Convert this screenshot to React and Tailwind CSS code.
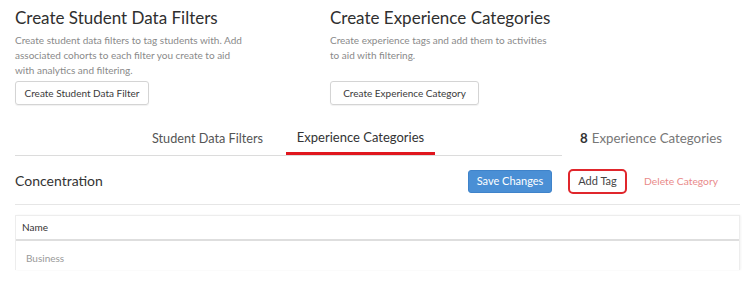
export default function App() {
  return (
    <div className="w-[750px] h-[299px] overflow-hidden bg-white pl-[15px] pr-[10px] pt-[7px] font-['Lato',sans-serif] text-[#333]">
      <div className="flex">
        <div className="w-[315px] flex flex-col items-start">
          <h2 className="text-[17px] leading-[22px] text-[#2f2f2f]">Create Student Data Filters</h2>
          <p className="mt-[4px] w-[235px] min-h-[45px] text-[10px] leading-[15px] text-[#8a8a8a]">
            Create student data filters to tag students with. Add associated cohorts to each filter you create to aid with analytics and filtering.
          </p>
          <button className="mt-[3px] h-[24px] w-[134px] rounded-[3px] border border-[#d4d4d4] text-[10px] text-[#3a3a3a] shadow-[0_1px_1px_rgba(0,0,0,0.06)]">
            Create Student Data Filter
          </button>
        </div>
        <div className="flex flex-col items-start">
          <h2 className="text-[17px] leading-[22px] text-[#2f2f2f]">Create Experience Categories</h2>
          <p className="mt-[4px] w-[226px] min-h-[45px] text-[10px] leading-[15px] text-[#8a8a8a]">
            Create experience tags and add them to activities to aid with filtering.
          </p>
          <button className="mt-[3px] h-[24px] w-[149px] rounded-[3px] border border-[#d4d4d4] text-[10px] text-[#3a3a3a] shadow-[0_1px_1px_rgba(0,0,0,0.06)]">
            Create Experience Category
          </button>
        </div>
      </div>

      <div className="mt-[21px] flex">
        <div className="w-[547px] flex pl-[114px] border-b border-[#dcdcdc]">
          <div className="w-[157px] h-[29px] flex items-center justify-center text-[12.7px] text-[#555] pb-[4px]">
            Student Data Filters
          </div>
          <div className="w-[149px] h-[29px] flex items-center justify-center border-b-[3px] border-[#e0161e] text-[13px] text-[#333] pb-[3px]">
            Experience Categories
          </div>
        </div>
        <div className="flex-1 h-[29px] flex items-center justify-center text-[13.3px] text-[#777] pb-[4px]">
          <span className="font-bold text-[#333] mr-[4px]">8</span>Experience Categories
        </div>
      </div>

      <div className="flex items-center pt-[13px] pb-[10px] border-b border-[#e6e6e6]">
        <div className="flex-1 text-[14px] text-[#333] mb-[2px]">Concentration</div>
        <button className="h-[23px] w-[84px] rounded-[3px] bg-[#4a8fd5] border border-[#3f83ca] text-[11px] text-white">
          Save Changes
        </button>
        <button className="ml-[16px] h-[25px] w-[59px] rounded-[5px] border-2 border-[#e0262c] text-[11px] text-[#444]">
          Add Tag
        </button>
        <div className="ml-[17px] mr-[22px] text-[10.3px] text-[#e98a8a]">Delete Category</div>
      </div>

      <div className="mt-[10px] border-x border-t border-[#ededed] shadow-[1px_0_2px_rgba(0,0,0,0.05)] h-[55px]">
        <div className="h-[25px] flex items-center px-[6px] border-b-2 border-[#dedede] text-[10px] text-[#333]">
          Name
        </div>
        <div className="pt-[11px] px-[10px] text-[10px] leading-[12px] text-[#999]">
          Business
        </div>
      </div>
    </div>
  );
}
